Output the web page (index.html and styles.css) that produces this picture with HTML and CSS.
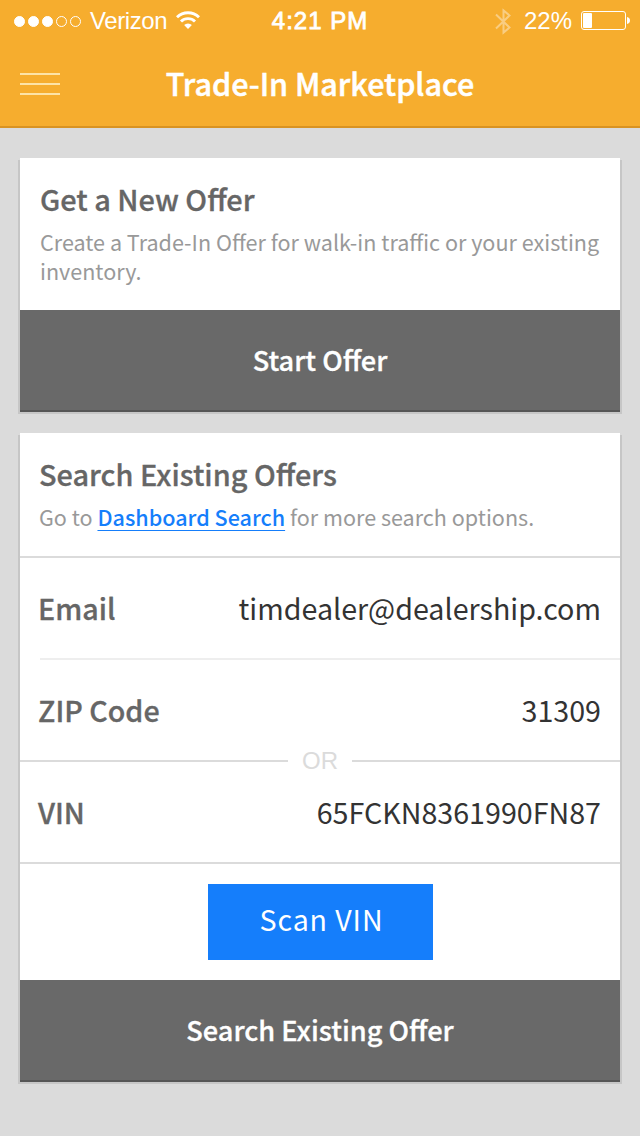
FILE: index.html
```html
<!DOCTYPE html>
<html lang="en">
<head>
  <meta charset="UTF-8" />
  <meta name="viewport" content="width=device-width, initial-scale=1.0" />
  <title>Trade-In Marketplace</title>
  <link rel="stylesheet" href="styles.css">
</head>
<body>
  <header class="header">
    <div class="status-bar">
      <div class="status-left">
        <div class="signal">
          <i class="dot full"></i><i class="dot full"></i><i class="dot full"></i><i class="dot"></i><i class="dot"></i>
        </div>
        <span class="carrier">Verizon</span>
        <svg class="wifi" width="24" height="18" viewBox="0 0 24 18" fill="none" stroke="#fff" stroke-width="2.9">
          <path d="M1 6.3a15.6 15.6 0 0 1 22 0" />
          <path d="M5 10.5a9.9 9.9 0 0 1 14 0" />
          <path d="M12 18l-3.9-3.9a5.5 5.5 0 0 1 7.8 0z" fill="#fff" stroke="none" />
        </svg>
      </div>
      <div class="time">4:21 PM</div>
      <div class="status-right">
        <svg class="bluetooth" width="16" height="27" viewBox="0 0 16 27" fill="none" stroke="#fff" stroke-width="2">
          <path d="M1 6.5l13.5 13-6 5v-22l6 5L1 20.5" />
        </svg>
        <span class="percent">22%</span>
        <svg class="battery" width="49" height="20" viewBox="0 0 49 20">
          <rect x="0.5" y="0.5" width="44" height="18" rx="2.5" fill="none" stroke="#fff" />
          <rect x="2" y="2" width="9" height="15" rx="1" fill="#fff" />
          <path d="M46 6c4 .5 4 6.5 0 7z" fill="#fff" />
        </svg>
      </div>
    </div>
    <div class="nav-bar">
      <button class="menu"><span></span><span></span><span></span></button>
      <h1>Trade-In Marketplace</h1>
    </div>
  </header>

  <main class="content">
    <section class="card">
      <div class="intro">
        <h2>Get a New Offer</h2>
        <p>Create a Trade-In Offer for walk-in traffic or your existing inventory.</p>
      </div>
      <button class="action">Start Offer</button>
    </section>

    <section class="card">
      <div class="intro search-intro">
        <h2>Search Existing Offers</h2>
        <p>Go to <a href="#">Dashboard Search</a> for more search options.</p>
      </div>
      <div class="row email">
        <span class="label">Email</span>
        <span class="value">timdealer@dealership.com</span>
      </div>
      <div class="row zip">
        <span class="label">ZIP Code</span>
        <span class="value">31309</span>
      </div>
      <div class="divider"><span>OR</span></div>
      <div class="row vin">
        <span class="label">VIN</span>
        <span class="value">65FCKN8361990FN87</span>
      </div>
      <div class="scan">
        <button class="scan-button">Scan VIN</button>
      </div>
      <button class="action">Search Existing Offer</button>
    </section>
  </main>
</body>
</html>
```
FILE: styles.css
```css
* {
  box-sizing: border-box;
  margin: 0;
  padding: 0;
}

body {
  height: 1136px;
  background-color: #dbdbdb;
  font-family: "Noto Sans CJK SC", "Noto Sans", sans-serif;
  color: #666;
  overflow: hidden;
}

button {
  border: none;
  font-family: inherit;
  display: block;
}

.header {
  height: 128px;
  background-color: #f6ad2e;
  border-bottom: 2px solid #d99322;
  color: #fff;
}

.status-bar {
  height: 42px;
  display: grid;
  grid-template-columns: 1fr auto 1fr;
  align-items: center;
  padding: 0 10px 0 14px;
  font-family: "Liberation Sans", sans-serif;
  font-size: 24px;
}

.status-left,
.status-right {
  display: flex;
  align-items: center;
}

.status-right {
  justify-content: flex-end;
}

.signal {
  display: flex;
  gap: 3px;
}

.dot {
  width: 11px;
  height: 11px;
  border: 1px solid #fff;
  border-radius: 50%;
}

.dot.full {
  background-color: #fff;
}

.carrier {
  margin: 0 9px 0 9px;
  letter-spacing: -0.4px;
}

.wifi {
  margin-bottom: 3px;
}

.time {
  margin-right: 4px;
  letter-spacing: 1px;
  -webkit-text-stroke: 0.8px #fff;
}

.bluetooth {
  opacity: 0.4;
  margin-right: 13px;
}

.battery {
  margin-left: 9px;
}

.nav-bar {
  height: 84px;
  display: grid;
  grid-template-columns: 40px 1fr 40px;
  align-items: center;
  padding: 0 20px;
}

.menu {
  height: 22px;
  background: none;
  display: flex;
  flex-direction: column;
  justify-content: space-between;
}

.menu span {
  width: 40px;
  height: 2px;
  background-color: #fde3a6;
}

h1 {
  padding-bottom: 2px;
  font-size: 30.5px;
  font-weight: 500;
  text-align: center;
  -webkit-text-stroke: 0.5px #fff;
}

.content {
  padding: 30px 20px;
  display: flex;
  flex-direction: column;
  gap: 21px;
}

.card {
  background-color: #fff;
  box-shadow: -2px 2px 0 #c6c6c6, 2px 2px 0 #c6c6c6;
}

.intro {
  height: 152px;
  padding: 20px 20px 0;
}

.search-intro {
  height: 125px;
  padding-left: 19px;
  border-bottom: 2px solid #dbdbdb;
}

h2 {
  font-size: 28.9px;
  line-height: 40px;
  font-weight: 500;
  -webkit-text-stroke: 0.3px #666;
}

p {
  font-size: 21.57px;
  line-height: 29px;
  color: #999;
  margin-top: 9px;
}

a {
  color: #157efb;
  font-weight: 500;
  text-decoration-thickness: 1px;
  text-underline-offset: 4px;
  text-decoration-skip-ink: none;
}

.action {
  width: 100%;
  height: 102px;
  padding-bottom: 2px;
  background-color: #696969;
  border-bottom: 2px solid #555;
  color: #fff;
  font-size: 27.2px;
  font-weight: 500;
  -webkit-text-stroke: 0.3px #fff;
}

.row {
  height: 100px;
  display: flex;
  justify-content: space-between;
  align-items: center;
  padding: 0 19px 2px 0;
  margin-left: 20px;
  font-size: 28.65px;
}

.email {
  height: 102px;
  border-bottom: 2px solid #eee;
}

.label {
  margin-left: -2px;
  font-weight: 500;
  -webkit-text-stroke: 0.3px #666;
}

.value {
  color: #333;
}

.divider {
  height: 2px;
  display: flex;
  align-items: center;
  gap: 14px;
  font-family: "Liberation Sans", sans-serif;
  font-size: 24px;
  color: #dbdbdb;
}

.divider::before,
.divider::after {
  content: "";
  flex: 1;
  height: 2px;
  background-color: #dbdbdb;
}

.scan {
  height: 118px;
  border-top: 2px solid #dbdbdb;
  display: flex;
  justify-content: center;
  padding-top: 20px;
}

.scan-button {
  width: 225px;
  height: 76px;
  padding: 0 0 7px 3px;
  background-color: #157efb;
  color: #fff;
  font-size: 28.6px;
  letter-spacing: 0.9px;
}
```
